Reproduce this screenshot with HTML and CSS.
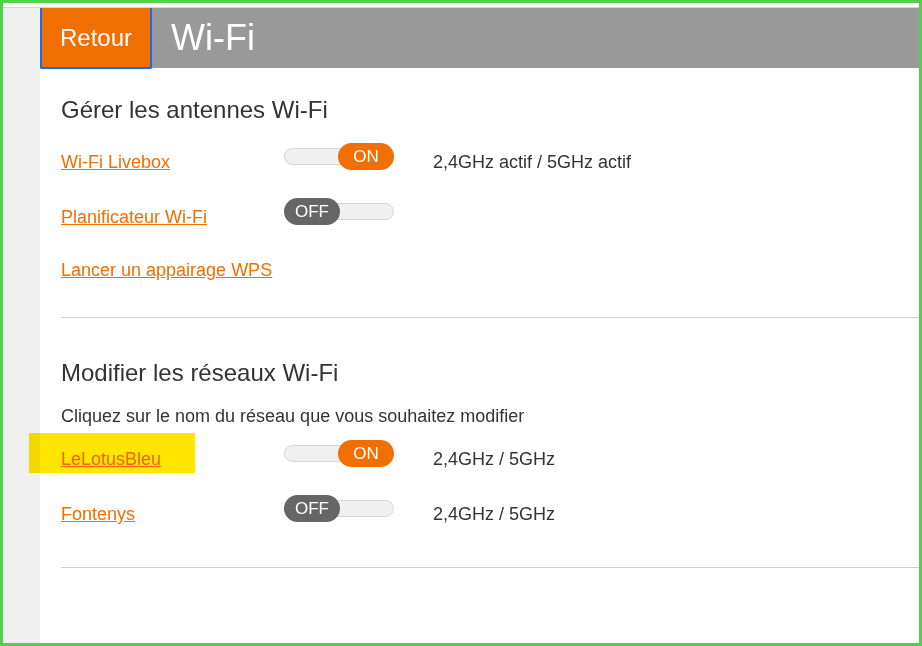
FILE: index.html
```html
<!DOCTYPE html>
<html lang="fr">
<head>
    <meta charset="UTF-8">
    <title>Wi-Fi</title>
    <link rel="stylesheet" href="styles.css">
</head>
<body>
    <div class="frame">
        <div class="topline"></div>
        <div class="layout">
            <div class="sidebar"></div>
            <div class="main">
                <div class="header">
                    <button class="back">Retour</button>
                    <h1>Wi-Fi</h1>
                </div>

                <div class="content">
                    <h2>Gérer les antennes Wi-Fi</h2>
                    <div class="row">
                        <a href="#" class="label">Wi-Fi Livebox</a>
                        <div class="toggle on"><span class="knob">ON</span></div>
                        <span class="status">2,4GHz actif / 5GHz actif</span>
                    </div>
                    <div class="row">
                        <a href="#" class="label">Planificateur Wi-Fi</a>
                        <div class="toggle off"><span class="knob">OFF</span></div>
                    </div>
                    <div class="row short">
                        <a href="#" class="label">Lancer un appairage WPS</a>
                    </div>

                    <hr class="sep">

                    <h2 class="second">Modifier les réseaux Wi-Fi</h2>
                    <p class="hint">Cliquez sur le nom du réseau que vous souhaitez modifier</p>
                    <div class="row networks">
                        <a href="#" class="label">LeLotusBleu</a>
                        <div class="toggle on"><span class="knob">ON</span></div>
                        <span class="status">2,4GHz / 5GHz</span>
                        <div class="highlight"></div>
                    </div>
                    <div class="row">
                        <a href="#" class="label">Fontenys</a>
                        <div class="toggle off"><span class="knob">OFF</span></div>
                        <span class="status">2,4GHz / 5GHz</span>
                    </div>

                    <hr class="sep last">
                </div>
            </div>
        </div>
    </div>
</body>
</html>
```

FILE: styles.css
```css
html, body {
    margin: 0;
    height: 100%;
}
body {
    font-family: "Liberation Sans", Arial, sans-serif;
    color: #333;
}
.frame {
    box-sizing: border-box;
    height: 646px;
    border: 3px solid #52cf4c;
    display: flex;
    flex-direction: column;
    background: #fff;
    overflow: hidden;
}
.topline {
    height: 4px;
    border-bottom: 1px solid #d2d2d2;
    background: #fff;
}
.layout {
    flex: 1;
    display: flex;
}
.sidebar {
    width: 37px;
    background: #f0f0f0;
}
.main {
    flex: 1;
    background: #fff;
}
.header {
    height: 60px;
    background: #999;
    display: flex;
    align-items: stretch;
}
.back {
    width: 112px;
    height: 61px;
    border: 2px solid #1a6ee6;
    border-top: none;
    border-radius: 0 0 2px 2px;
    background: #f16e00;
    color: #fff;
    font-family: inherit;
    font-size: 24px;
    padding: 0;
    cursor: pointer;
}
.header h1 {
    margin: 0 0 0 19px;
    font-size: 36px;
    font-weight: normal;
    color: #fff;
    line-height: 60px;
}
.content {
    padding: 28px 0 0 21px;
}
h2 {
    margin: 0 0 19px;
    font-size: 24px;
    font-weight: normal;
    line-height: 28px;
}
h2.second {
    margin: 41px 0 18px;
}
.row {
    position: relative;
    display: flex;
    align-items: flex-start;
    height: 55px;
}
.row.short {
    height: 53px;
    margin-top: -2px;
}
.label {
    width: 223px;
    margin-top: 9px;
    font-size: 18px;
    line-height: 20px;
    color: #f16e00;
}
.status {
    margin: 9px 0 0 39px;
    font-size: 18px;
    line-height: 20px;
}
.toggle {
    position: relative;
    width: 110px;
    height: 28px;
}
.toggle::before {
    content: "";
    position: absolute;
    left: 0;
    right: 0;
    top: 5px;
    height: 15px;
    border: 1px solid #d6d6d6;
    border-radius: 9px;
    background: #f0f0f0;
}
.knob {
    position: absolute;
    top: 0;
    width: 56px;
    height: 27px;
    border-radius: 14px;
    color: #fff;
    font-size: 17px;
    line-height: 27px;
    text-align: center;
}
.toggle.on .knob {
    right: 0;
    background: #f16e00;
}
.toggle.off .knob {
    left: 0;
    background: #666;
}
.sep {
    margin: 13px 0 0;
    border: none;
    border-top: 1px solid #cfcfcf;
}
.hint {
    margin: 0 0 13px;
    font-size: 18px;
    line-height: 22px;
}
.sep.last {
    margin-top: 17px;
}
.highlight {
    position: absolute;
    left: -32px;
    top: -7px;
    width: 166px;
    height: 40px;
    background: #ffe600;
    mix-blend-mode: multiply;
}
```
